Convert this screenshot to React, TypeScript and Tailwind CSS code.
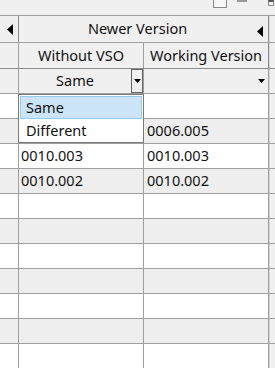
import React from 'react'

const font = { fontFamily: '"Noto Sans", "Open Sans", sans-serif' }

const dataRows: [string, string][] = [
  ['', ''],
  ['', '0006.005'],
  ['0010.003', '0010.003'],
  ['0010.002', '0010.002'],
  ['', ''],
  ['', ''],
  ['', ''],
  ['', ''],
  ['', ''],
  ['', ''],
  ['', ''],
]

function LeftArrow() {
  return (
    <svg width="6" height="11" viewBox="0 0 6 11" className="block">
      <path d="M6 0 L0 5.5 L6 11 Z" fill="#000" />
    </svg>
  )
}

function DownArrow() {
  return (
    <svg width="7" height="4" viewBox="0 0 7 4" className="block">
      <path d="M0 0 L7 0 L3.5 4 Z" fill="#000" />
    </svg>
  )
}

export default function App() {
  return (
    <div
      className="relative w-[275px] h-[368px] overflow-hidden bg-[#f0f0f0] text-[14.5px] text-[#111]"
      style={font}
    >
      {/* top strip with clipped controls */}
      <div className="flex h-[16px] items-start border-b border-[#a0a0a0]">
        <div className="ml-[213px] h-[8px] w-[14px] border-b border-r border-l border-[#8a8a8a] bg-[#f7f7f7]" />
        <div className="ml-[10px] h-[2px] w-[10px] bg-[#9a9a9a]" />
        <div className="ml-[21px] h-[6px] w-[6px] border border-[#8a8a8a] border-t-2 border-t-[#555]" />
      </div>

      {/* header row 1 */}
      <div className="flex h-[27px] border-b border-[#a0a0a0]">
        <div className="flex w-[19px] items-center justify-end pr-[5px] border-r border-[#8c8c8c]">
          <LeftArrow />
        </div>
        <div className="relative flex w-[250px] items-center justify-center pr-[12px] border-r border-[#8c8c8c]">
          Newer Version
          <div className="absolute right-[5px] top-[10px]">
            <LeftArrow />
          </div>
        </div>
        <div className="flex-1 border-l border-[#d6d6d6]" />
      </div>

      {/* header row 2 */}
      <div className="flex h-[26px] border-b border-[#8c8c8c]">
        <div className="w-[19px] border-r border-[#a0a0a0]" />
        <div className="flex w-[125px] items-center justify-center border-r border-[#a0a0a0]">
          Without VSO
        </div>
        <div className="flex w-[125px] items-center justify-center border-r border-[#8c8c8c]">
          Working Version
        </div>
        <div className="flex-1 border-l border-[#d6d6d6]" />
      </div>

      {/* filter row */}
      <div className="flex h-[25px] border-b border-[#a0a0a0]">
        <div className="w-[19px] border-r border-[#a0a0a0]" />
        <div className="flex w-[125px] border-r border-[#a0a0a0]">
          <div className="flex flex-1 items-center justify-center">Same</div>
          <div className="flex w-[12px] items-center justify-center border border-[#646464] bg-[#f0f0f0]">
            <DownArrow />
          </div>
        </div>
        <div className="flex w-[125px] items-center justify-end pr-[3px] border-r border-[#a0a0a0]">
          <DownArrow />
        </div>
        <div className="flex-1 border-l border-[#d6d6d6]" />
      </div>

      {/* data rows */}
      {dataRows.map((r, i) => (
        <div
          key={i}
          className={`flex h-[25px] border-b border-[#a0a0a0] ${i % 2 === 0 ? 'bg-white' : 'bg-[#eeeeee]'}`}
        >
          <div className="w-[19px] border-r border-[#a0a0a0]" />
          <div className="flex w-[125px] items-center pl-[2px] border-r border-[#a0a0a0]">{r[0]}</div>
          <div className="flex w-[125px] items-center pl-[3px] border-r border-[#a0a0a0]">{r[1]}</div>
          <div className="flex-1 bg-[#f0f0f0] border-l border-[#d6d6d6]" />
        </div>
      ))}

      {/* open dropdown list */}
      <div className="absolute left-[18px] top-[94px] w-[126px] h-[49px] border border-[#7a7a7a] bg-white p-px">
        <div className="flex h-[23px] items-center border border-[#99c9ef] bg-[#cce4f7] pl-[5px]">Same</div>
        <div className="flex h-[23px] items-center pl-[6px]">Different</div>
      </div>
    </div>
  )
}
